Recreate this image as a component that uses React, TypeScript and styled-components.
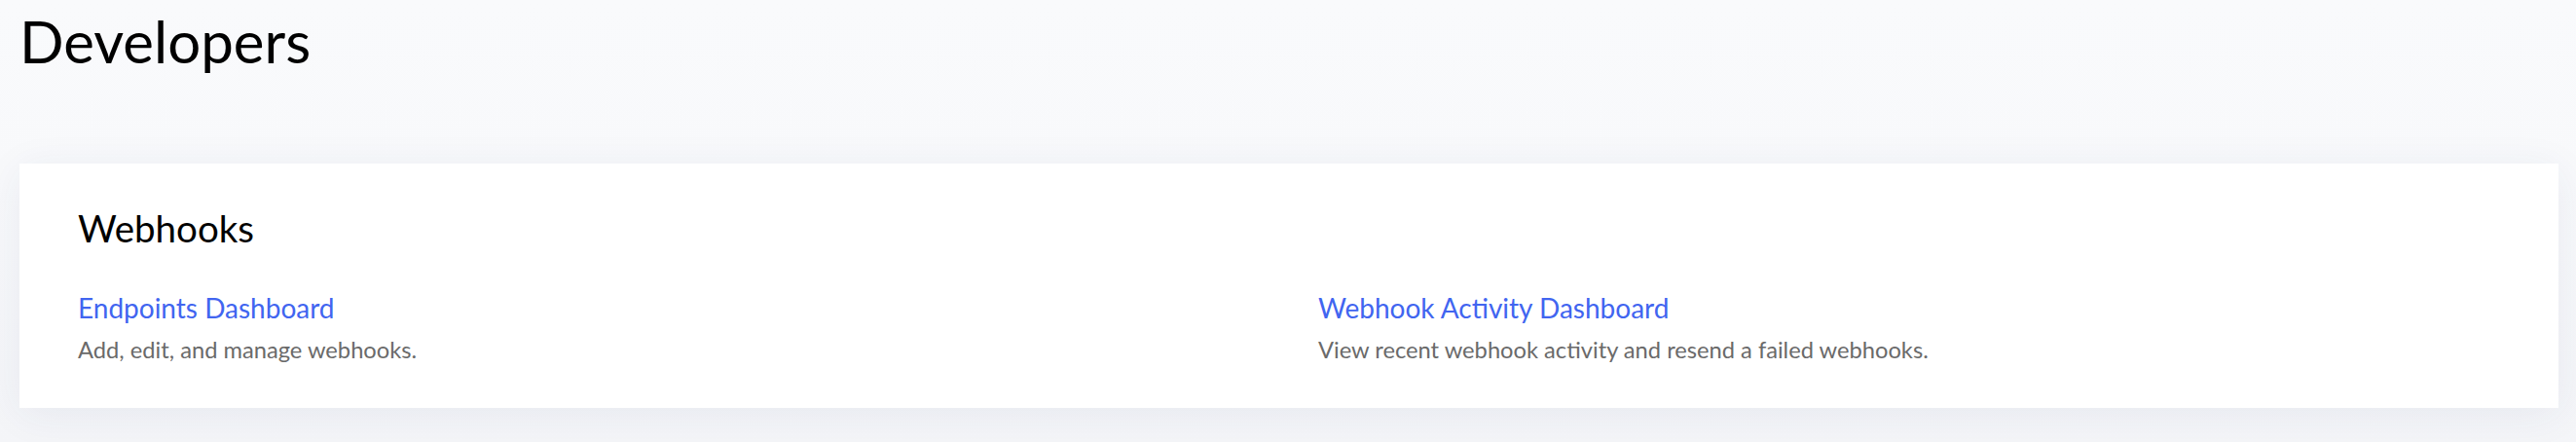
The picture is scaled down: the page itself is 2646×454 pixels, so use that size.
import React from "react";
import styled, { createGlobalStyle } from "styled-components";

const Global = createGlobalStyle`
  html, body {
    margin: 0;
    padding: 0;
    background: #f8f9fb;
    font-family: Lato, "Noto Sans", sans-serif;
  }
  #root {
    min-height: 454px;
  }
`;

const Page = styled.main`
  min-height: 454px;
  box-sizing: border-box;
  padding: 6px 18px 0 20px;
  background: linear-gradient(#f9fafc 0%, #f8f9fb 40%, #f4f5f8 100%);
`;

const Title = styled.h1`
  margin: 0;
  font-size: 60px;
  line-height: 72px;
  font-weight: 400;
  color: #000;
`;

const Card = styled.section`
  margin-top: 90px;
  background: #fff;
  padding: 45px 60px 45px 60px;
  box-shadow: 0 6px 40px rgba(40, 50, 110, 0.07);
`;

const CardTitle = styled.h2`
  margin: 0;
  font-size: 38.5px;
  line-height: 43px;
  font-weight: 400;
  color: #000;
`;

const Grid = styled.div`
  margin-top: 45px;
  display: grid;
  grid-template-columns: 1fr 1fr;
  column-gap: 60px;
`;

const Item = styled.div`
  display: flex;
  flex-direction: column;
  gap: 13px;
`;

const Link = styled.a`
  font-size: 28px;
  line-height: 31px;
  color: #4165f0;
  text-decoration: none;
  cursor: pointer;
`;

const Desc = styled.p`
  margin: 0;
  font-size: 23.7px;
  line-height: 29px;
  color: #6a6a6a;
`;

const items = [
  { title: "Endpoints Dashboard", desc: "Add, edit, and manage webhooks." },
  {
    title: "Webhook Activity Dashboard",
    desc: "View recent webhook activity and resend a failed webhooks.",
  },
];

export default function App() {
  return (
    <>
      <Global />
      <Page>
        <Title>Developers</Title>
        <Card>
          <CardTitle>Webhooks</CardTitle>
          <Grid>
            {items.map((it) => (
              <Item key={it.title}>
                <Link href="#">{it.title}</Link>
                <Desc>{it.desc}</Desc>
              </Item>
            ))}
          </Grid>
        </Card>
      </Page>
    </>
  );
}
